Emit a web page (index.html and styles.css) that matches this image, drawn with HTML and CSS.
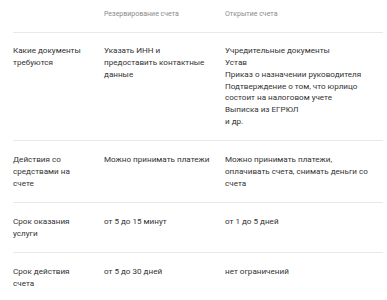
FILE: index.html
```html
<!DOCTYPE html>
<html lang="ru">
<head>
<meta charset="utf-8">
<link rel="stylesheet" href="styles.css">
</head>
<body>
<div class="table">
  <div class="row head">
    <div class="cell"></div>
    <div class="cell">Резервирование счета</div>
    <div class="cell">Открытие счета</div>
  </div>
  <div class="row">
    <div class="cell">Какие документы<br>требуются</div>
    <div class="cell">Указать ИНН и<br>предоставить контактные<br>данные</div>
    <div class="cell">Учредительные документы<br>Устав<br>Приказ о назначении руководителя<br>Подтверждение о том, что юрлицо<br>состоит на налоговом учете<br>Выписка из ЕГРЮЛ<br>и др.</div>
  </div>
  <div class="row">
    <div class="cell">Действия со<br>средствами на<br>счете</div>
    <div class="cell">Можно принимать платежи</div>
    <div class="cell">Можно принимать платежи,<br>оплачивать счета, снимать деньги со<br>счета</div>
  </div>
  <div class="row">
    <div class="cell">Срок оказания<br>услуги</div>
    <div class="cell">от 5 до 15 минут</div>
    <div class="cell">от 1 до 5 дней</div>
  </div>
  <div class="row last">
    <div class="cell">Срок действия<br>счета</div>
    <div class="cell">от 5 до 30 дней</div>
    <div class="cell">нет ограничений</div>
  </div>
</div>
</body>
</html>
```
FILE: styles.css
```css
html, body {
  margin: 0;
  padding: 0;
  background: #fff;
}
body {
  font-family: Roboto, "Liberation Sans", sans-serif;
  color: #333;
  font-size: 8.1px;
  line-height: 11.8px;
}
.table {
  margin-left: 13px;
  width: 370px;
}
.row {
  display: grid;
  grid-template-columns: 91px 121px 1fr;
  border-bottom: 1px solid #e8e8e8;
  padding: 12.7px 0;
}
.row.head {
  padding: 9px 0 12.5px;
  font-size: 7px;
  line-height: 10px;
  color: #8a8a8a;
}
.row.last {
  border-bottom: none;
}
.cell {
  white-space: nowrap;
}
```
